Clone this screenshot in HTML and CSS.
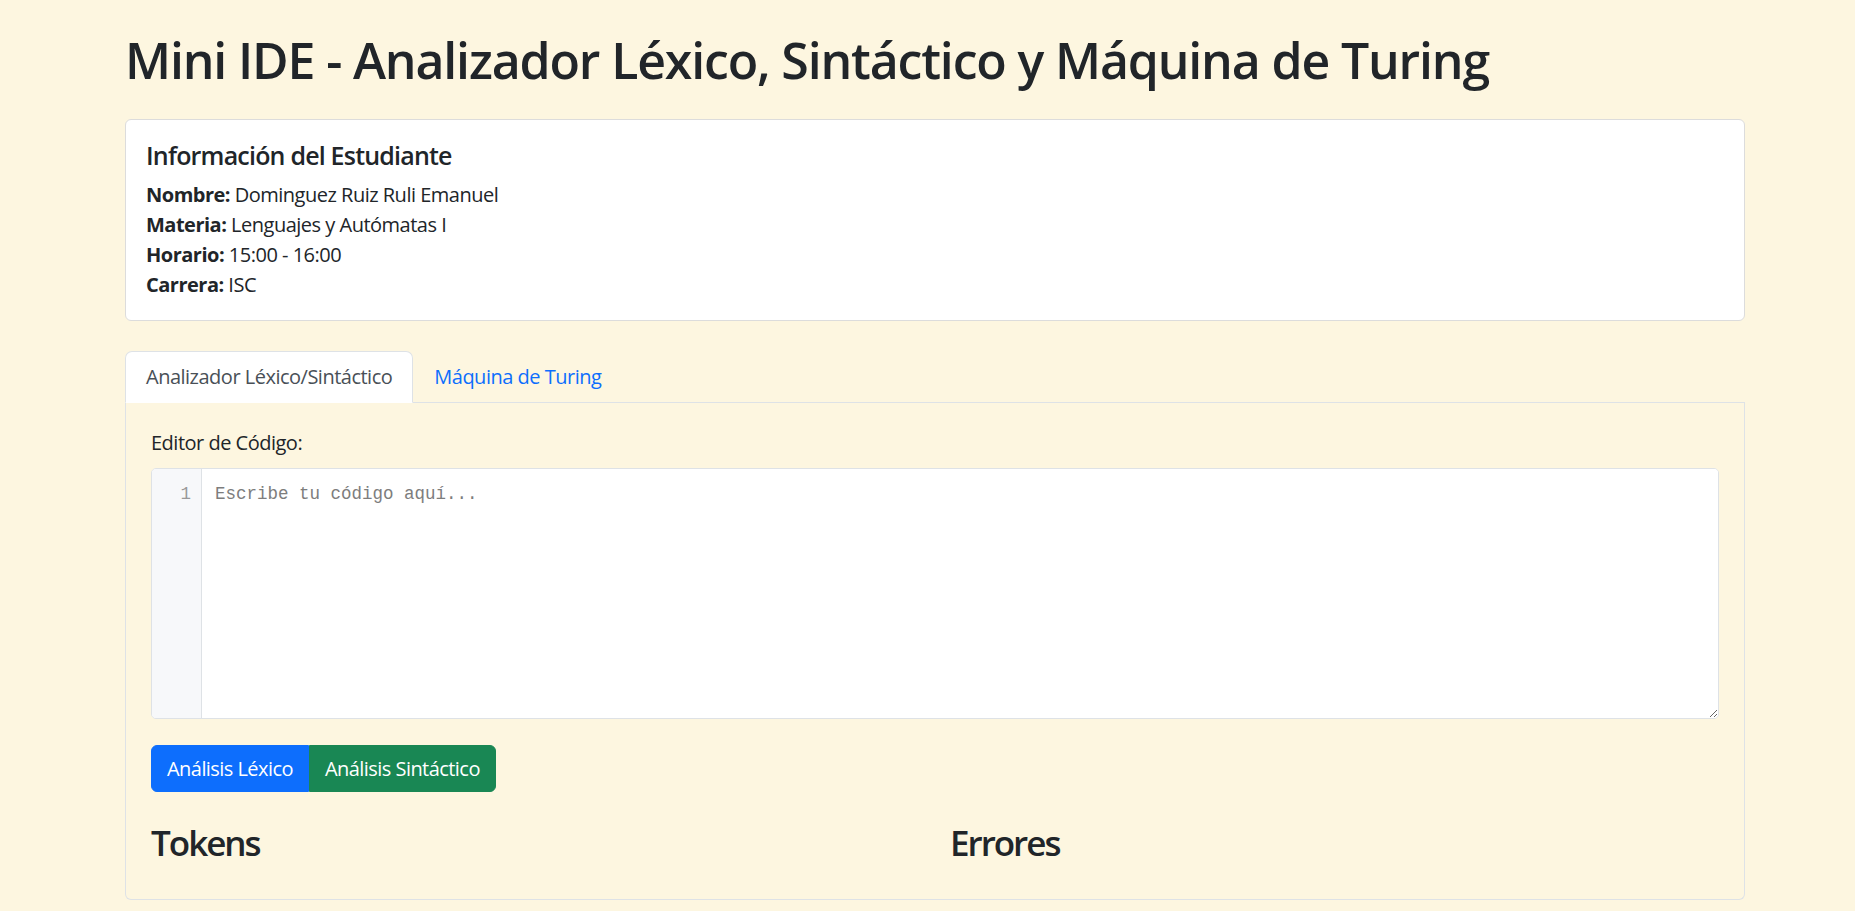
FILE: index.html
```html
<!DOCTYPE html>
<html lang="es">
<head>
<meta charset="utf-8">
<title>Mini IDE</title>
<link rel="stylesheet" href="styles.css">
</head>
<body>
<div class="page">
  <h1 class="title">Mini IDE - Analizador Léxico, Sintáctico y Máquina de Turing</h1>

  <div class="card">
    <h5 class="card-title">Información del Estudiante</h5>
    <p class="info"><strong>Nombre:</strong> Dominguez Ruiz Ruli Emanuel</p>
    <p class="info"><strong>Materia:</strong> Lenguajes y Autómatas I</p>
    <p class="info"><strong>Horario:</strong> 15:00 - 16:00</p>
    <p class="info"><strong>Carrera:</strong> ISC</p>
  </div>

  <ul class="tabs">
    <li class="tab active">Analizador Léxico/Sintáctico</li>
    <li class="tab">Máquina de Turing</li>
  </ul>

  <div class="panel">
    <label class="label" for="code">Editor de Código:</label>
    <div class="editor">
      <div class="gutter">1</div>
      <textarea id="code" class="code" placeholder="Escribe tu código aquí..."></textarea>
    </div>
    <div class="btn-group">
      <button class="btn btn-blue">Análisis Léxico</button><button class="btn btn-green">Análisis Sintáctico</button>
    </div>
    <div class="results">
      <h3 class="res-title">Tokens</h3>
      <h3 class="res-title">Errores</h3>
    </div>
  </div>
</div>
</body>
</html>
```

FILE: styles.css
```css
html, body {
  margin: 0;
  padding: 0;
}
body {
  background: #fdf6e0;
  color: #212529;
  font-family: "Open Sans", "Noto Sans", sans-serif;
  font-size: 20px;
  line-height: 30px;
  letter-spacing: -0.5px;
}
.page {
  width: 1620px;
  padding-left: 125px;
}
.title {
  margin: 30px 0 29px;
  font-size: 50px;
  line-height: 60px;
  font-weight: 600;
  letter-spacing: -1.15px;
}
.card {
  background: #fff;
  border: 1px solid #dcdcdc;
  border-radius: 6px;
  padding: 20px;
}
.card-title {
  margin: 0 0 10px;
  font-size: 25px;
  line-height: 30px;
  font-weight: 600;
  letter-spacing: -0.8px;
}
.info {
  margin: 0;
}
.info strong {
  font-weight: 700;
}
.tabs {
  list-style: none;
  margin: 30px 0 0;
  padding: 0;
  display: flex;
  border-bottom: 1px solid #dee2e6;
}
.tab {
  padding: 10px 20px;
  line-height: 30px;
  border: 1px solid transparent;
  border-radius: 7px 7px 0 0;
  margin-bottom: -1px;
  color: #0d6efd;
}
.tab.active {
  background: #fff;
  color: #495057;
  border-color: #dee2e6 #dee2e6 #fff;
}
.panel {
  border: 1px solid #dee2e6;
  border-top: 0;
  border-radius: 0 0 6px 6px;
  padding: 25px;
}
.label {
  display: block;
  margin-bottom: 10px;
}
.editor {
  display: flex;
  height: 249px;
  border: 1px solid #dee2e6;
  border-radius: 5px;
  background: #fff;
  overflow: hidden;
}
.gutter {
  width: 39px;
  padding: 12px 10px 0 0;
  background: #f7f8fa;
  border-right: 1px solid #dee2e6;
  color: #999;
  text-align: right;
  font-family: "Liberation Mono", monospace;
  font-size: 17.5px;
  line-height: 26px;
  letter-spacing: 0;
}
.code {
  flex: 1;
  border: 0;
  outline: 0;
  margin: 0;
  padding: 12px 13px;
  resize: vertical;
  font-family: "Liberation Mono", monospace;
  font-size: 17.5px;
  line-height: 26px;
  letter-spacing: 0;
  color: #212529;
  background: #fff;
}
.code::placeholder {
  color: #7d7d7d;
}
.btn-group {
  display: inline-flex;
  margin-top: 26px;
}
.btn {
  font-family: inherit;
  font-size: 20px;
  line-height: 30px;
  letter-spacing: -0.55px;
  padding: 7.5px 15px;
  border: 1px solid transparent;
  color: #fff;
  margin: 0;
}
.btn-blue {
  background: #0d6efd;
  border-color: #0d6efd;
  border-radius: 6px 0 0 6px;
}
.btn-green {
  background: #198754;
  border-color: #198754;
  border-radius: 0 6px 6px 0;
}
.results {
  display: grid;
  grid-template-columns: 1fr 1fr;
  column-gap: 30px;
  margin-top: 30px;
}
.res-title {
  margin: 0 0 10px;
  font-size: 35px;
  line-height: 42px;
  font-weight: 600;
  letter-spacing: -2px;
}
```
